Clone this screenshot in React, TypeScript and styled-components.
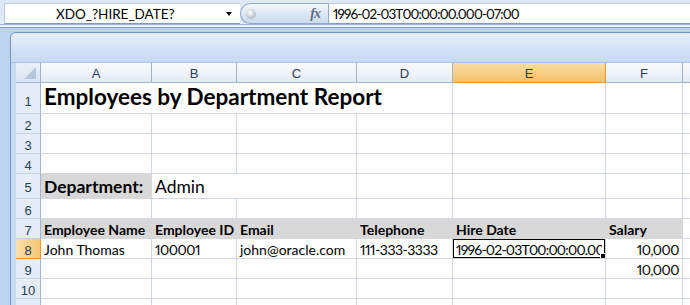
import React from "react";
import styled, { createGlobalStyle } from "styled-components";

const Global = createGlobalStyle`
  html, body { margin: 0; padding: 0; }
  body {
    width: 690px; height: 305px; overflow: hidden;
    background: #bcd2ee;
    font-family: "Lato", "Liberation Sans", sans-serif;
  }
`;

const Page = styled.div`
  display: flex;
  flex-direction: column;
  width: 690px;
  height: 305px;
  overflow: hidden;
  & > * { flex-shrink: 0; }
`;

const FormulaBar = styled.div`
  display: flex;
  align-items: stretch;
  height: 21px;
  padding: 3px 0 0 4px;
  background: #dfe9f6;
  border-bottom: 1px solid #9fb7d7;
`;

const NameBox = styled.div`
  position: relative;
  display: flex;
  align-items: center;
  width: 236px;
  box-sizing: border-box;
  background: #fff;
  border-top: 1px solid #b9cbe3;
  border-left: 1px solid #b9cbe3;
  border-bottom: 1px solid #7f9cc5;
  padding-left: 51px;
  font-size: 13.5px;
  color: #000;
`;

const DropArrow = styled.span`
  position: absolute;
  right: 8px;
  top: 8px;
  width: 0;
  height: 0;
  border-left: 3.5px solid transparent;
  border-right: 3.5px solid transparent;
  border-top: 4px solid #000;
`;

const Pill = styled.div`
  display: flex;
  align-items: center;
  justify-content: space-between;
  width: 88px;
  box-sizing: border-box;
  padding: 0 8px 0 5px;
  border: 1px solid #8fa9cf;
  border-right: none;
  border-radius: 11px 0 0 11px;
  background: linear-gradient(#f3f7fc, #dbe6f4 55%, #cfdcee);
`;

const Knob = styled.span`
  width: 10px;
  height: 10px;
  border-radius: 50%;
  background: radial-gradient(circle at 40% 35%, #ffffff, #b6bfca 70%, #9aa5b3);
`;

const Fx = styled.span`
  font-family: "Liberation Serif", serif;
  font-style: italic;
  font-weight: bold;
  font-size: 14px;
  color: #5f6f86;
  letter-spacing: -1px;
`;

const FormulaInput = styled.div`
  flex: 1;
  display: flex;
  align-items: center;
  box-sizing: border-box;
  padding-left: 4px;
  background: #fff;
  border-top: 1px solid #b9cbe3;
  border-left: 1px solid #8fa9cf;
  border-bottom: 1px solid #7f9cc5;
  font-size: 13.5px;
  letter-spacing: -0.85px;
  font-variant-numeric: proportional-nums;
  color: #000;
`;

const Band = styled.div`
  height: 2px;
  background: #eaf1fa;
  border-bottom: 1px solid #7f9ccb;
`;

const Gap = styled.div`
  height: 4px;
  background: #bcd2ee;
`;

const Workspace = styled.div`
  flex: 1 1 auto !important;
  display: flex;
  padding-left: 10px;
  min-height: 0;
`;

const Window = styled.div`
  flex: 1;
  display: flex;
  flex-direction: column;
  border-top: 1px solid #6f92c6;
  border-left: 1px solid #6f92c6;
  border-top-left-radius: 6px;
  background: #c7dbf3;
  overflow: hidden;
  & > * { flex-shrink: 0; }
`;

const WindowTop = styled.div`
  height: 30px;
  background: linear-gradient(#e6eff9, #d5e4f6 50%, #c6daf3);
  border-bottom: 1px solid #a8c4e8;
  box-sizing: border-box;
`;

const SheetArea = styled.div`
  padding-left: 5px;
  background: #c7dbf3;
`;

const Grid = styled.div`
  display: grid;
  grid-template-columns: 25px 111px 85px 120px 96px 153px 77px 40px;
  grid-template-rows: 20px 31px 20px 20px 20px 25px 20px 20px 20px 20px 20px 20px;
  background: #fff;
`;

const Corner = styled.div`
  position: relative;
  box-sizing: border-box;
  background: linear-gradient(#e9eff8, #dbe5f2);
  border-right: 1px solid #9eb6ce;
  border-bottom: 1px solid #9eb6ce;
`;

const ColHead = styled.div<{ $sel?: boolean }>`
  display: flex;
  align-items: center;
  justify-content: center;
  box-sizing: border-box;
  font-family: "Liberation Sans", sans-serif;
  font-size: 13px;
  color: #27415f;
  padding-top: 1px;
  background: ${(p) =>
    p.$sel ? "linear-gradient(#f9dea6, #f6cc7f 60%, #f3c16a)" : "linear-gradient(#f9fafc, #f0f3f8 55%, #e3e9f2)"};
  border-right: 1px solid ${(p) => (p.$sel ? "#f29436" : "#9eb6ce")};
  border-bottom: 1px solid ${(p) => (p.$sel ? "#f29436" : "#9eb6ce")};
`;

const RowHead = styled.div<{ $sel?: boolean; $bottom?: boolean }>`
  display: flex;
  align-items: ${(p) => (p.$bottom ? "flex-end" : "center")};
  justify-content: center;
  box-sizing: border-box;
  padding-top: ${(p) => (p.$bottom ? "0" : "3px")};
  padding-bottom: ${(p) => (p.$bottom ? "4px" : "0")};
  font-family: "Liberation Sans", sans-serif;
  font-size: 13px;
  color: #27415f;
  background: ${(p) => (p.$sel ? "linear-gradient(90deg, #f9dea6, #f5c878)" : "#e4ecf7")};
  border-right: 1px solid ${(p) => (p.$sel ? "#f29436" : "#9eb6ce")};
  border-bottom: 1px solid ${(p) => (p.$sel ? "#f29436" : "#c5d3e3")};
`;

const Cell = styled.div<{
  $span?: number;
  $bg?: string;
  $bold?: boolean;
  $size?: number;
  $right?: boolean;
  $bottom?: boolean;
  $num?: boolean;
}>`
  position: relative;
  grid-column: span ${(p) => p.$span ?? 1};
  display: flex;
  align-items: ${(p) => (p.$bottom ? "flex-end" : "center")};
  justify-content: ${(p) => (p.$right ? "flex-end" : "flex-start")};
  box-sizing: border-box;
  padding: ${(p) => (p.$bottom ? "0 3px 3px 3px" : "1px 3px 0 3px")};
  min-width: 0;
  white-space: nowrap;
  overflow: ${(p) => (p.$span && p.$span > 1 ? "visible" : "hidden")};
  font-size: ${(p) => p.$size ?? 14}px;
  font-weight: ${(p) => (p.$bold ? 700 : 400)};
  letter-spacing: ${(p) => (p.$num ? "-0.5px" : "normal")};
  font-variant-numeric: proportional-nums;
  color: #000;
  background: ${(p) => p.$bg ?? "#fff"};
  border-right: 1px solid ${(p) => p.$bg ?? "#d0d7e5"};
  border-bottom: 1px solid ${(p) => p.$bg ?? "#d0d7e5"};
`;

const Selection = styled.div`
  position: absolute;
  left: -1px;
  top: -1px;
  right: -1px;
  bottom: -1px;
  border: 2px solid #000;
  pointer-events: none;
`;

const Handle = styled.div`
  position: absolute;
  right: -3px;
  bottom: -3px;
  width: 5px;
  height: 5px;
  background: #000;
  border: 1px solid #fff;
`;

const SelText = styled.span`
  display: block;
  width: 100%;
  overflow: hidden;
  letter-spacing: -0.8px;
`;

const cols = ["A", "B", "C", "D", "E", "F", ""];
const GREY = "#d8d8d8";

type C = {
  t?: string;
  span?: number;
  bg?: string;
  bold?: boolean;
  size?: number;
  right?: boolean;
  bottom?: boolean;
  sel?: boolean;
  num?: boolean;
};

const blank = (n: number): C[] => Array.from({ length: n }, () => ({}));

const rows: { n: number; cells: C[]; bottom?: boolean }[] = [
  {
    n: 1,
    bottom: true,
    cells: [
      { t: "Employees by Department Report", span: 4, bold: true, size: 22.5, bottom: true },
      ...blank(3),
    ],
  },
  { n: 2, cells: blank(7) },
  { n: 3, cells: blank(7) },
  { n: 4, cells: blank(7) },
  {
    n: 5,
    cells: [
      { t: "Department:", bg: GREY, bold: true, size: 17.5 },
      { t: "Admin", span: 2, size: 17.5 },
      ...blank(4),
    ],
  },
  { n: 6, cells: blank(7) },
  {
    n: 7,
    cells: [
      { t: "Employee Name", bg: GREY, bold: true },
      { t: "Employee ID", bg: GREY, bold: true },
      { t: "Email", bg: GREY, bold: true },
      { t: "Telephone", bg: GREY, bold: true },
      { t: "Hire Date", bg: GREY, bold: true },
      { t: "Salary", bg: GREY, bold: true },
      {},
    ],
  },
  {
    n: 8,
    cells: [
      { t: "John Thomas" },
      { t: "100001", num: true },
      { t: "john@oracle.com" },
      { t: "111-333-3333", num: true },
      { t: "1996-02-03T00:00:00.000-07:00", sel: true, num: true },
      { t: "10,000", right: true, num: true },
      {},
    ],
  },
  { n: 9, cells: [...blank(5), { t: "10,000", right: true, num: true }, {}] },
  { n: 10, cells: blank(7) },
  { n: 11, cells: blank(7) },
];

export default function App() {
  return (
    <Page>
      <Global />
      <FormulaBar>
        <NameBox>
          XDO_?HIRE_DATE?
          <DropArrow />
        </NameBox>
        <Pill>
          <Knob />
          <Fx>fx</Fx>
        </Pill>
        <FormulaInput>1996-02-03T00:00:00.000-07:00</FormulaInput>
      </FormulaBar>
      <Band />
      <Gap />
      <Workspace>
        <Window>
          <WindowTop />
          <SheetArea>
            <Grid>
              <Corner>
                <svg width="24" height="19" viewBox="0 0 24 19" style={{ position: "absolute", left: 0, top: 0 }}>
                  <polygon points="20,4 20,16 8,16" fill="#b4c6dc" />
                </svg>
              </Corner>
              {cols.map((c, i) => (
                <ColHead key={i} $sel={c === "E"}>
                  {c}
                </ColHead>
              ))}
              {rows.map((r) => (
                <React.Fragment key={r.n}>
                  <RowHead $sel={r.n === 8} $bottom={r.bottom}>
                    {r.n}
                  </RowHead>
                  {r.cells.map((c, i) => (
                    <Cell
                      key={i}
                      $span={c.span}
                      $bg={c.bg}
                      $bold={c.bold}
                      $size={c.size}
                      $right={c.right}
                      $bottom={c.bottom}
                      $num={c.num}
                    >
                      {c.sel ? <SelText>{c.t}</SelText> : c.t}
                      {c.sel && (
                        <Selection>
                          <Handle />
                        </Selection>
                      )}
                    </Cell>
                  ))}
                </React.Fragment>
              ))}
            </Grid>
          </SheetArea>
        </Window>
      </Workspace>
    </Page>
  );
}
